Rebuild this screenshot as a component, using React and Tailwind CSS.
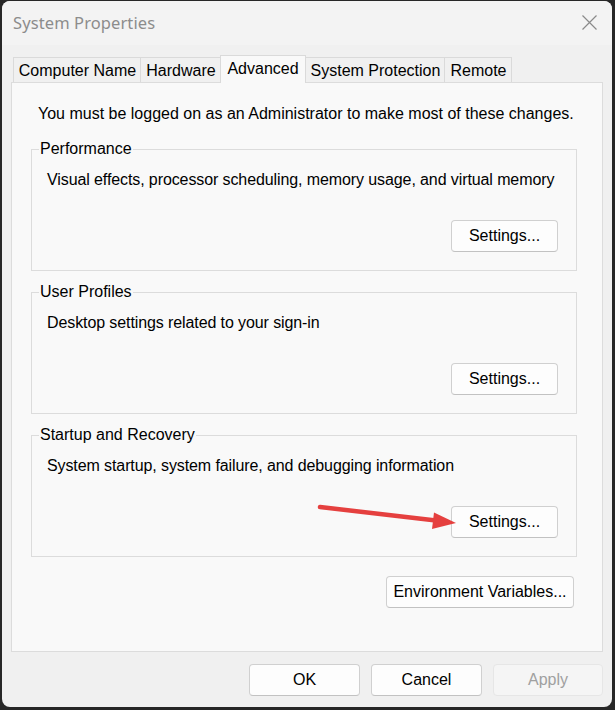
import React from "react";

function Btn({ children, className = "", disabled = false }) {
  return (
    <div
      className={
        "h-[32px] flex items-center justify-center rounded-[4px] border text-[16px] leading-[18px] whitespace-nowrap " +
        (disabled
          ? "bg-[#f5f5f5] border-[#e6e6e6] text-[#a0a0a0] "
          : "bg-[#fdfdfd] border-[#d0d0d0] border-b-[#c2c2c2] text-black ") +
        className
      }
    >
      {children}
    </div>
  );
}

function Group({ label, desc }) {
  return (
    <fieldset className="min-w-0 border border-[#dcdcdc]">
      <legend className="ml-[7px] px-[1px] text-[16px] leading-[18px] text-black">{label}</legend>
      <div className="pl-[15px] pr-[18px] pb-[18px] pt-[13px] flex flex-col">
        <div className="text-[16px] leading-[18px] text-black whitespace-nowrap tracking-[-0.1px]">{desc}</div>
        <div className="mt-[31px] flex justify-end">
          <Btn className="w-[107px]">Settings...</Btn>
        </div>
      </div>
    </fieldset>
  );
}

export default function App() {
  const tabs = [
    { name: "Computer Name", w: "w-[128px]" },
    { name: "Hardware", w: "w-[81px]" },
    { name: "Advanced", w: "w-[86px]", active: true },
    { name: "System Protection", w: "w-[140px]" },
    { name: "Remote", w: "w-[68px]" },
  ];
  return (
    <div className="relative w-[615px] h-[710px] bg-[#272727] pt-[1px] pl-[2px] pr-[3px] pb-[3px] font-['Liberation_Sans',Arial,sans-serif]">
      <div className="h-full rounded-[8px] bg-[#f0f0f0] flex flex-col overflow-hidden">
        <div className="h-[44px] shrink-0 bg-[#f3f3f3] flex items-center justify-between pl-[11px] pr-[15px]">
          <span className="font-['Noto_Sans',sans-serif] text-[16.5px] text-[#8c8c8c] tracking-[0.1px]">System Properties</span>
          <svg width="15" height="15" viewBox="0 0 15 15" className="mt-[-1px]">
            <path d="M0.5 0.5 L14.5 14.5 M14.5 0.5 L0.5 14.5" stroke="#8a8a8a" strokeWidth="1.2" fill="none" />
          </svg>
        </div>
        <div className="flex-1 flex flex-col px-[9px]">
          <div className="h-[37px] shrink-0 flex items-end pl-[2px]">
            {tabs.map((t, i) =>
              t.active ? (
                <div
                  key={t.name}
                  className={`${t.w} relative z-10 -ml-[1px] mb-[-1px] h-[28px] bg-[#f9f9f9] border border-b-0 border-[#dadada] flex items-center justify-center pb-[2px] text-[16px] text-black`}
                >
                  {t.name}
                </div>
              ) : (
                <div
                  key={t.name}
                  className={`${t.w} ${i > 0 ? "-ml-[1px]" : ""} h-[25px] bg-[#f0f0f0] border border-b-0 border-[#dadada] flex items-center justify-center pt-[1px] pl-[1px] text-[16px] text-black`}
                >
                  {t.name}
                </div>
              )
            )}
          </div>
          <div className="h-[570px] shrink-0 border border-[#dcdcdc] bg-[#f9f9f9] pt-[22px] pl-[19px] pr-[25px] flex flex-col">
            <div className="ml-[7px] text-[16px] leading-[18px] text-black whitespace-nowrap">
              You must be logged on as an Administrator to make most of these changes.
            </div>
            <div className="mt-[17px] flex flex-col gap-[12px]">
              <Group label="Performance" desc="Visual effects, processor scheduling, memory usage, and virtual memory" />
              <Group label="User Profiles" desc="Desktop settings related to your sign-in" />
              <Group label="Startup and Recovery" desc="System startup, system failure, and debugging information" />
            </div>
            <div className="mt-[19px] flex justify-end mr-[3px]">
              <Btn className="w-[188px]">Environment Variables...</Btn>
            </div>
          </div>
          <div className="mt-[12px] flex justify-end gap-[11px]">
            <Btn className="w-[111px]">OK</Btn>
            <Btn className="w-[111px]">Cancel</Btn>
            <Btn className="w-[110px]" disabled>Apply</Btn>
          </div>
        </div>
      </div>
      <svg className="absolute left-0 top-0 pointer-events-none" width="615" height="710">
        <line x1="320" y1="507" x2="436" y2="520.5" stroke="#e5403f" strokeWidth="4.5" strokeLinecap="round" />
        <polygon points="456,523 434,512.5 432,529" fill="#e5403f" />
      </svg>
    </div>
  );
}
